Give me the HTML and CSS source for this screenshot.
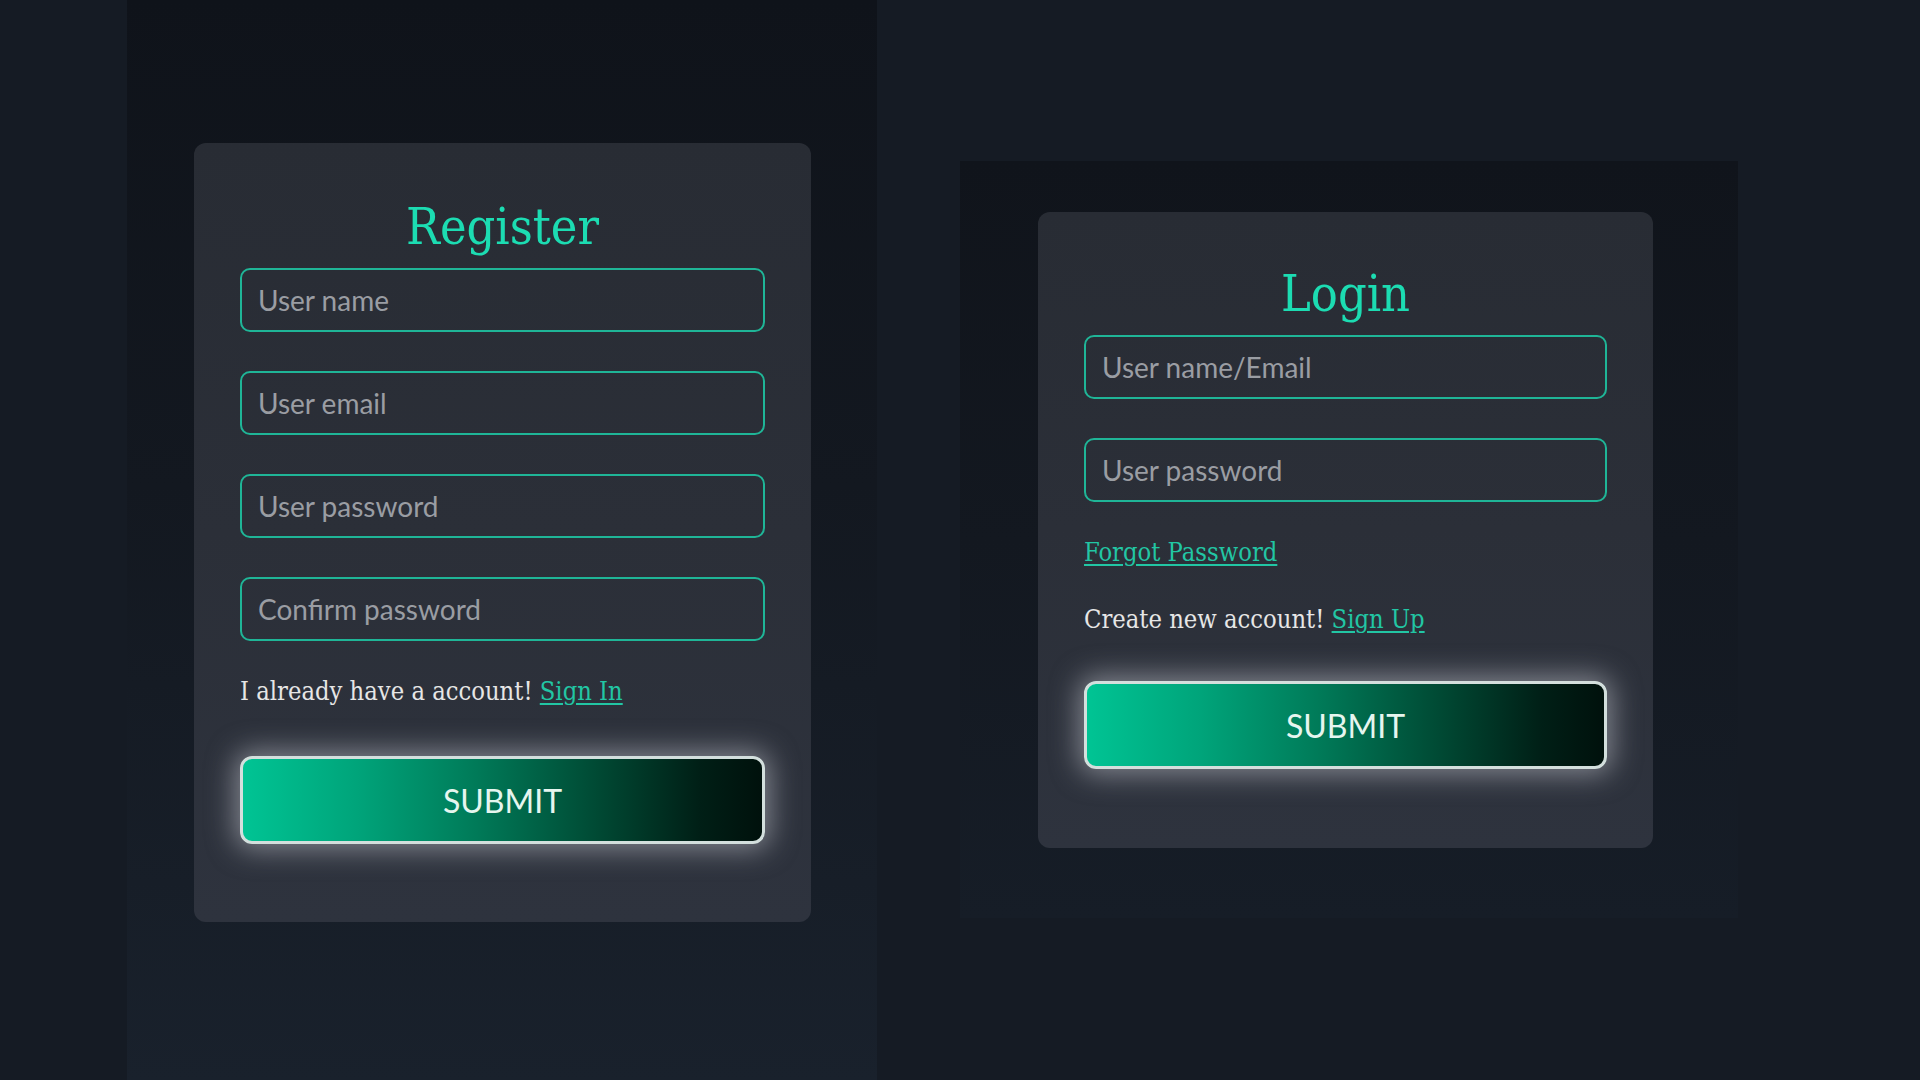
FILE: index.html
```html
<!DOCTYPE html>
<html lang="en">
<head>
<meta charset="utf-8">
<title>Register / Login</title>
<link rel="stylesheet" href="styles.css">
</head>
<body>
<main class="page">
  <section class="panel panel-register">
    <form class="card card-register">
      <h1 class="title">Register</h1>
      <div class="fields">
        <input class="field" type="text" placeholder="User name">
        <input class="field" type="email" placeholder="User email">
        <input class="field" type="password" placeholder="User password">
        <input class="field" type="password" placeholder="Confirm password">
      </div>
      <p class="note note-first">I already have a account! <a href="#" class="link">Sign In</a></p>
      <button type="button" class="submit">SUBMIT</button>
    </form>
  </section>
  <section class="panel panel-login">
    <form class="card">
      <h1 class="title">Login</h1>
      <div class="fields">
        <input class="field" type="text" placeholder="User name/Email">
        <input class="field" type="password" placeholder="User password">
      </div>
      <p class="note note-first"><a href="#" class="link">Forgot Password</a></p>
      <p class="note note-second">Create new account! <a href="#" class="link">Sign Up</a></p>
      <button type="button" class="submit submit-login">SUBMIT</button>
    </form>
  </section>
</main>
</body>
</html>
```
FILE: styles.css
```css
* { box-sizing: border-box; }

html, body {
  margin: 0;
  padding: 0;
  width: 1920px;
  height: 1080px;
  overflow: hidden;
  background: #151b24;
}

.page {
  display: flex;
  align-items: flex-start;
  height: 1080px;
  padding-left: 127px;
  gap: 83px;
}

.panel-register {
  width: 750px;
  height: 1080px;
  padding: 143px 66px 0 67px;
  background: linear-gradient(to bottom, #0f131a 0%, #131820 45%, #19212c 100%);
}

.panel-login {
  width: 778px;
  margin-top: 161px;
  padding: 51px 85px 70px 78px;
  background: linear-gradient(to bottom, #10141b 0%, #131820 50%, #161d27 100%);
}

.card {
  display: flex;
  flex-direction: column;
  padding: 52px 46px 79px 46px;
  border-radius: 12px;
  background: linear-gradient(to bottom, #282c34 0%, #2b2f38 50%, #2e333e 100%);
}

.card-register {
  padding-top: 54px;
  padding-bottom: 78px;
}

.title {
  margin: 0 0 11px 0;
  height: 60px;
  font-family: "DejaVu Serif Condensed", "DejaVu Serif", serif;
  font-stretch: condensed;
  font-weight: normal;
  font-size: 50px;
  line-height: 60px;
  text-align: center;
  color: #1cdcb2;
}

.fields {
  display: flex;
  flex-direction: column;
  gap: 39px;
}

.field {
  display: block;
  width: 100%;
  height: 64px;
  margin: 0;
  padding: 0 16px;
  border: 2px solid #1fb597;
  border-radius: 10px;
  background: transparent;
  font-family: Lato, "Open Sans", sans-serif;
  font-size: 28px;
  color: #e4e4e4;
  outline: none;
}

.field::placeholder {
  color: #9a9da3;
}

.note {
  margin: 0;
  height: 36px;
  font-family: "DejaVu Serif Condensed", "DejaVu Serif", serif;
  font-stretch: condensed;
  font-size: 25.3px;
  line-height: 36px;
  color: #e6e6e6;
  white-space: nowrap;
}

.note-first { margin-top: 33px; }
.note-second { margin-top: 31px; }

.link {
  color: #22c6a4;
  text-decoration: underline;
  text-underline-offset: 3px;
  text-decoration-thickness: 2px;
}

.submit {
  display: block;
  width: 100%;
  height: 88px;
  margin-top: 46px;
  border: 3px solid #d3dfdd;
  border-radius: 12px;
  background: linear-gradient(to right, #00c494 0%, #00a47a 22%, #007a58 45%, #004a34 68%, #001f16 88%, #00110c 100%);
  box-shadow: 0 0 28px 5px rgba(215, 218, 226, 0.5);
  font-family: Lato, "Open Sans", sans-serif;
  font-size: 32px;
  color: #e6f6ef;
  cursor: pointer;
}

.submit-login { margin-top: 43px; }
```
